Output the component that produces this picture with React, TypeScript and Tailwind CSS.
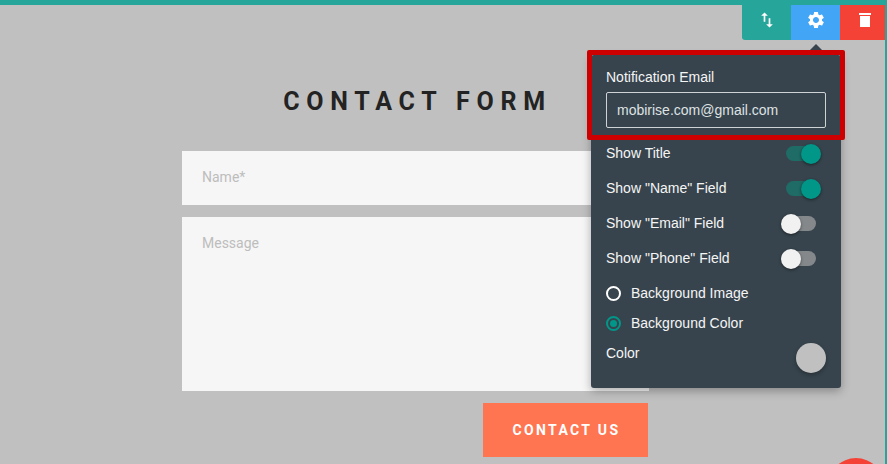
const roboto = "font-['Roboto',sans-serif]"

function Toggle({ on }: { on?: boolean }) {
  return (
    <div className={`relative h-[15px] w-[30px] rounded-full ${on ? 'bg-[#1f6b66]' : 'bg-[#84888b]'}`}>
      <div
        className={`absolute -top-[2.5px] h-5 w-5 rounded-full shadow-[0_1px_3px_rgba(0,0,0,0.5)] ${
          on ? 'left-[15px] bg-[#009688]' : '-left-[5px] bg-[#f1f1f1]'
        }`}
      />
    </div>
  )
}

const toggles = [
  { label: 'Show Title', on: true },
  { label: 'Show "Name" Field', on: true },
  { label: 'Show "Email" Field', on: false },
  { label: 'Show "Phone" Field', on: false },
]

function SettingsPanel() {
  return (
    <div className="absolute left-[591px] top-[50px] w-[250px] rounded-[3px] bg-[#37444d] px-[15px] pb-[15px] pt-[12px] text-sm text-[#f5f5f5] shadow-[0_3px_10px_rgba(0,0,0,0.3)] font-['Liberation_Sans',Arial,sans-serif]">
      {/* caret */}
      <div className="absolute -top-[11px] left-[219px] h-0 w-0 border-x-[6px] border-b-[6px] border-x-transparent border-b-[#37444d]" />

      {/* red highlight */}
      <div className="absolute -left-[4px] -top-[5px] h-[90px] w-[258px] rounded-[2px] border-[5px] border-[#cc0000]" />

      <div className="flex h-5 items-center">Notification Email</div>
      <div className="mt-[5px] flex h-9 items-center rounded-[2px] border border-[#d0d3d5] px-[10px] text-[#dfe2e3]">
        mobirise.com@gmail.com
      </div>

      <div className="mt-[8px] flex flex-col">
        {toggles.map((t) => (
          <div key={t.label} className="flex h-[35px] items-center justify-between pr-[10px]">
            <span className="-mt-[1px]">{t.label}</span>
            <Toggle on={t.on} />
          </div>
        ))}
      </div>

      <div className="mt-[2px] flex h-[30px] items-center gap-[10px]">
        <div className="h-[15px] w-[15px] rounded-full border-2 border-white" />
        <span>Background Image</span>
      </div>
      <div className="flex h-[30px] items-center gap-[10px]">
        <div className="flex h-[15px] w-[15px] items-center justify-center rounded-full border-2 border-[#009688]">
          <div className="h-[7px] w-[7px] rounded-full bg-[#009688]" />
        </div>
        <span>Background Color</span>
      </div>
      <div className="flex items-start justify-between">
        <span className="mt-[5px]">Color</span>
        <div className="mt-[5px] h-[30px] w-[30px] rounded-full bg-[#c0c0c0] shadow-[0_2px_4px_rgba(0,0,0,0.3)]" />
      </div>
    </div>
  )
}

function Toolbar() {
  return (
    <div className="absolute -right-[2px] -top-[5px] flex h-10 text-white">
      <div className="flex w-[49px] items-center justify-center rounded-bl-[3px] bg-[#26a69a]">
        <svg width="20" height="20" viewBox="0 0 24 24" fill="currentColor">
          <path d="M16 17.01V10h-2v7.01h-3L15 21l4-3.99h-3zM9 3L5 6.99h3V14h2V6.99h3L9 3z" />
        </svg>
      </div>
      <div className="flex w-[49px] items-center justify-center bg-[#42a5f5]">
        <svg width="20" height="20" viewBox="0 0 24 24" fill="currentColor">
          <path d="M19.14 12.94c.04-.3.06-.61.06-.94 0-.32-.02-.64-.07-.94l2.03-1.58c.18-.14.23-.41.12-.61l-1.92-3.32c-.12-.22-.37-.29-.59-.22l-2.39.96c-.5-.38-1.03-.7-1.62-.94l-.36-2.54c-.04-.24-.24-.41-.48-.41h-3.84c-.24 0-.43.17-.47.41l-.36 2.54c-.59.24-1.13.57-1.62.94l-2.39-.96c-.22-.08-.47 0-.59.22L2.74 8.87c-.12.21-.08.47.12.61l2.03 1.58c-.05.3-.09.63-.09.94s.02.64.07.94l-2.03 1.58c-.18.14-.23.41-.12.61l1.92 3.32c.12.22.37.29.59.22l2.39-.96c.5.38 1.03.7 1.62.94l.36 2.54c.05.24.24.41.48.41h3.84c.24 0 .44-.17.47-.41l.36-2.54c.59-.24 1.13-.56 1.62-.94l2.39.96c.22.08.47 0 .59-.22l1.92-3.32c.12-.22.07-.47-.12-.61l-2.01-1.58zM12 15.6c-1.98 0-3.6-1.62-3.6-3.6s1.62-3.6 3.6-3.6 3.6 1.62 3.6 3.6-1.62 3.6-3.6 3.6z" />
        </svg>
      </div>
      <div className="flex w-[47px] items-center justify-center bg-[#f44336] pl-[3px]">
        <svg width="12" height="14" viewBox="0 0 12 14" fill="currentColor">
          <rect x="0" y="0" width="12" height="2" />
          <rect x="1" y="3" width="10" height="11" />
        </svg>
      </div>
    </div>
  )
}

export default function App() {
  return (
    <div className="relative h-[464px] w-[887px] overflow-hidden border-r-2 border-t-[5px] border-[#26a69a] bg-[#c0c0c0]">
      <div className={`ml-[182px] flex w-[467px] flex-col ${roboto}`}>
        <h1 className="mt-[80px] pl-1 text-center text-[25px] font-bold leading-[34px] tracking-[6.75px] text-[#232323]">
          CONTACT FORM
        </h1>
        <div className="mt-[32px] h-[54px] bg-[#f6f6f6] px-5 pt-[16px] text-sm leading-[20px] text-[#bdbdbd]">Name*</div>
        <div className="mt-3 h-[174px] bg-[#f6f6f6] px-5 pt-4 text-sm leading-[20px] text-[#bdbdbd]">Message</div>
        <div className="mt-3 mr-px flex h-[54px] w-[165px] items-center justify-center self-end bg-[#ff7551] pl-[2px] text-sm font-bold tracking-[2.35px] text-white">
          CONTACT US
        </div>
      </div>

      <Toolbar />
      <SettingsPanel />

      {/* floating button, mostly off the bottom edge */}
      <div className="absolute left-[828px] top-[453px] h-14 w-14 rounded-full bg-[#f44336]" />
    </div>
  )
}
